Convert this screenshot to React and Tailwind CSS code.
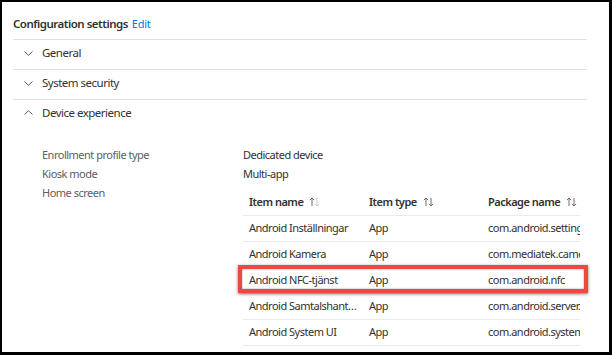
import React from "react";

const font = { fontFamily: '"Noto Sans", "Open Sans", sans-serif' };

function Chevron({ up }) {
  return (
    <svg width="9" height="5" viewBox="0 0 9 5" className="shrink-0 block">
      {up ? (
        <polyline points="0.5,4.5 4.5,0.7 8.5,4.5" fill="none" stroke="#605e5c" strokeWidth="1" />
      ) : (
        <polyline points="0.5,0.5 4.5,4.3 8.5,0.5" fill="none" stroke="#605e5c" strokeWidth="1" />
      )}
    </svg>
  );
}

function SortIcon({ active }) {
  const upC = "#605e5c";
  const downC = active ? "#c8c6c4" : "#605e5c";
  return (
    <svg width="11" height="10" viewBox="0 0 11 10" className="shrink-0 block">
      <line x1="3" y1="1" x2="3" y2="9" stroke={upC} strokeWidth="0.9" />
      <polyline points="0.9,3.1 3,1 5.1,3.1" fill="none" stroke={upC} strokeWidth="0.9" />
      <line x1="8" y1="1" x2="8" y2="9" stroke={downC} strokeWidth="0.9" />
      <polyline points="5.9,6.9 8,9 10.1,6.9" fill="none" stroke={downC} strokeWidth="0.9" />
    </svg>
  );
}

const rows = [
  ["Android Inställningar", "App", "com.android.settings"],
  ["Android Kamera", "App", "com.mediatek.camera"],
  ["Android NFC-tjänst", "App", "com.android.nfc"],
  ["Android Samtalshanterare", "App", "com.android.server.telecom"],
  ["Android System UI", "App", "com.android.systemui"],
];

export default function App() {
  return (
    <div
      style={font}
      className="w-[612px] h-[355px] bg-white border-l-2 border-t-2 border-r-[3px] border-b-[3px] border-black overflow-hidden text-[#323130]"
    >
      <div className="pl-[11px] pr-[22px]">
        <div className="pt-[14px] h-[37px] flex items-start">
          <span className="text-[11.5px] leading-[16px] font-semibold tracking-[-0.5px]">Configuration settings</span>
          <span className="ml-[4px] text-[11px] leading-[16px] tracking-[-0.3px] text-[#0078d4]">Edit</span>
        </div>
        <div className="border-t border-[#e1dfdd] h-[30px] flex items-start pt-[5px]">
          <div className="w-[29px] pl-[11px] pt-[6px]"><Chevron /></div>
          <span className="text-[11.5px] leading-[16px] tracking-[-0.5px]">General</span>
        </div>
        <div className="border-t border-[#e1dfdd] h-[30px] flex items-start pt-[5px]">
          <div className="w-[29px] pl-[11px] pt-[6px]"><Chevron /></div>
          <span className="text-[11.5px] leading-[16px] tracking-[-0.5px]">System security</span>
        </div>
        <div className="border-t border-[#e1dfdd] flex items-start pt-[5px]">
          <div className="w-[29px] pl-[11px] pt-[5px]"><Chevron up /></div>
          <span className="text-[11.5px] leading-[16px] tracking-[-0.5px]">Device experience</span>
        </div>
        <div className="mt-[24px] pl-[29px] text-[11px] tracking-[-0.5px]">
          <div className="flex h-[19px] leading-[19px]">
            <span className="w-[201px] text-[#605e5c]">Enrollment profile type</span>
            <span>Dedicated device</span>
          </div>
          <div className="flex h-[19px] leading-[19px]">
            <span className="w-[201px] text-[#605e5c]">Kiosk mode</span>
            <span>Multi-app</span>
          </div>
          <div className="flex">
            <span className="w-[201px] h-[19px] leading-[19px] text-[#605e5c] shrink-0">Home screen</span>
            <div className="relative mt-[2px]">
              <div className="w-[337px] overflow-hidden">
                <div className="w-[420px]">
                  <div className="flex h-[31px] pt-[9px] border-b border-[#edebe9] font-semibold">
                    <div className="w-[120px] px-[6px] flex items-start gap-[6px]">
                      <span className="leading-[16px]">Item name</span>
                      <span className="pt-[3px]"><SortIcon active /></span>
                    </div>
                    <div className="w-[119px] px-[6px] flex items-start gap-[6px]">
                      <span className="leading-[16px]">Item type</span>
                      <span className="pt-[3px]"><SortIcon /></span>
                    </div>
                    <div className="w-[150px] px-[6px] flex items-start gap-[6px]">
                      <span className="leading-[16px]">Package name</span>
                      <span className="pt-[3px]"><SortIcon /></span>
                    </div>
                  </div>
                  {rows.map((r) => (
                    <div key={r[0]} className="flex h-[26px] items-center border-b border-[#edebe9]">
                      <div className="w-[120px] px-[6px] truncate">{r[0]}</div>
                      <div className="w-[119px] px-[6px]">{r[1]}</div>
                      <div className="w-[180px] px-[6px] whitespace-nowrap">{r[2]}</div>
                    </div>
                  ))}
                </div>
              </div>
              <div className="absolute left-[-5px] top-[80px] w-[350px] h-[28px] border-[4px] border-[#ec4a3e] shadow-[0_1px_3px_rgba(0,0,0,0.55),inset_0_0_2px_rgba(0,0,0,0.45)] pointer-events-none" />
            </div>
          </div>
        </div>
      </div>
    </div>
  );
}
